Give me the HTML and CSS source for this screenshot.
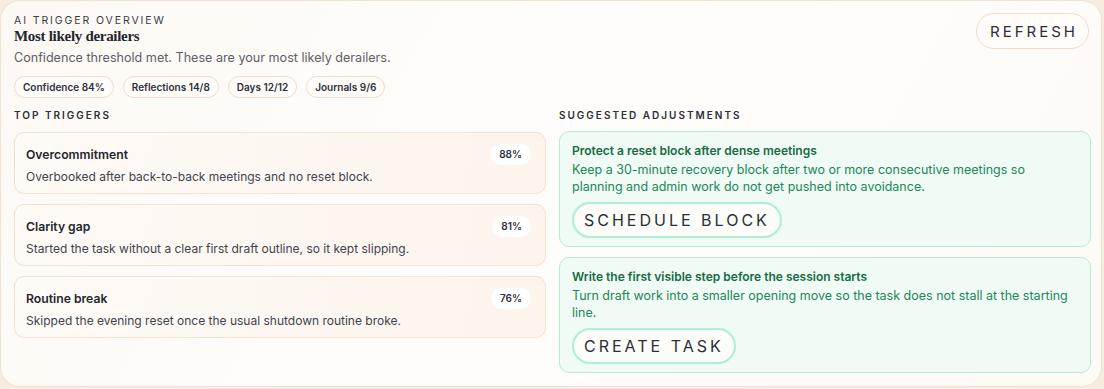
FILE: index.html
```html
<!DOCTYPE html>
<html lang="en">
<head>
    <meta charset="UTF-8">
    <meta name="viewport" content="width=device-width, initial-scale=1.0">
    <title>AI Trigger Overview</title>
    <link rel="stylesheet" href="styles.css">
</head>
<body>

    <section class="overview">
        <div class="overview-head">
            <div class="head-text">
                <div class="eyebrow">AI Trigger Overview</div>
                <h2>Most likely derailers</h2>
                <p class="subtitle">Confidence threshold met. These are your most likely derailers.</p>
                <div class="chips">
                    <span class="chip">Confidence 84%</span>
                    <span class="chip">Reflections 14/8</span>
                    <span class="chip">Days 12/12</span>
                    <span class="chip">Journals 9/6</span>
                </div>
            </div>
            <button class="refresh-btn">Refresh</button>
        </div>

        <div class="columns">
            <div class="column">
                <div class="section-label">Top Triggers</div>
                <div class="trigger">
                    <div class="trigger-top">
                        <span class="trigger-title">Overcommitment</span>
                        <span class="pct">88%</span>
                    </div>
                    <p>Overbooked after back-to-back meetings and no reset block.</p>
                </div>
                <div class="trigger">
                    <div class="trigger-top">
                        <span class="trigger-title">Clarity gap</span>
                        <span class="pct">81%</span>
                    </div>
                    <p>Started the task without a clear first draft outline, so it kept slipping.</p>
                </div>
                <div class="trigger">
                    <div class="trigger-top">
                        <span class="trigger-title">Routine break</span>
                        <span class="pct">76%</span>
                    </div>
                    <p>Skipped the evening reset once the usual shutdown routine broke.</p>
                </div>
            </div>

            <div class="column">
                <div class="section-label">Suggested Adjustments</div>
                <div class="suggestion">
                    <div class="suggestion-title">Protect a reset block after dense meetings</div>
                    <p>Keep a 30-minute recovery block after two or more consecutive meetings so planning and admin work do not get pushed into avoidance.</p>
                    <button class="action-btn">Schedule block</button>
                </div>
                <div class="suggestion">
                    <div class="suggestion-title">Write the first visible step before the session starts</div>
                    <p>Turn draft work into a smaller opening move so the task does not stall at the starting line.</p>
                    <button class="action-btn">Create task</button>
                </div>
            </div>
        </div>
    </section>

</body>
</html>
```
FILE: styles.css
```css
body {
    margin: 0;
    padding: 0;
    font-family: 'Inter', 'Noto Sans', sans-serif;
    background-color: #f7ece0;
    color: #2b2f3a;
}
.overview {
    box-sizing: border-box;
    width: 1102px;
    height: 387px;
    padding: 13px 13px 0 13px;
    border: 1px solid #f2e2d2;
    border-radius: 20px;
    background: linear-gradient(120deg, #fdf8f3 0%, #fffdfb 45%, #fefaf6 100%);
}
.overview-head {
    display: flex;
    justify-content: space-between;
    align-items: flex-start;
}
.eyebrow {
    font-size: 10.5px;
    letter-spacing: 1.9px;
    text-transform: uppercase;
    color: #3a3d45;
    line-height: 13px;
}
.overview h2 {
    margin: 0;
    font-family: 'Liberation Serif', 'DejaVu Serif', serif;
    font-weight: bold;
    font-size: 15px;
    letter-spacing: -0.3px;
    line-height: 19px;
    color: #23262e;
}
.subtitle {
    margin: 3px 0 0 0;
    font-size: 12.6px;
    line-height: 17px;
    color: #5d6068;
}
.chips {
    display: flex;
    gap: 9px;
    margin-top: 10px;
}
.chip {
    box-sizing: border-box;
    height: 22px;
    line-height: 20px;
    padding: 0 8px;
    border: 1px solid #f1dccb;
    border-radius: 11px;
    background-color: #fffcf9;
    font-size: 10px;
    font-weight: 600;
    color: #2b2f3a;
}
.refresh-btn {
    box-sizing: border-box;
    height: 36px;
    margin: -1px -1px 0 0;
    padding: 0 10px 0 13px;
    border: 1px solid #f1dccb;
    border-radius: 18px;
    background-color: #fffcf9;
    font-family: 'Inter', sans-serif;
    font-size: 15px;
    letter-spacing: 3px;
    text-transform: uppercase;
    color: #2b2f3a;
    cursor: pointer;
}
.columns {
    display: grid;
    grid-template-columns: 532px 532px;
    column-gap: 13px;
    margin-top: 11px;
}
.section-label {
    font-size: 10px;
    font-weight: 600;
    letter-spacing: 2px;
    text-transform: uppercase;
    color: #2b2f3a;
    line-height: 12px;
    margin-bottom: 11px;
}
.trigger {
    box-sizing: border-box;
    height: 62px;
    margin-bottom: 10px;
    padding: 11px 14px 0 11px;
    border: 1px solid #f3e1d1;
    border-radius: 10px;
    background: linear-gradient(100deg, #fefaf6 0%, #fdf4ec 100%);
}
.trigger-top {
    display: flex;
    justify-content: space-between;
    align-items: center;
    height: 20px;
}
.trigger-title {
    font-size: 12.2px;
    font-weight: 600;
    color: #23262e;
}
.pct {
    box-sizing: border-box;
    height: 21px;
    line-height: 21px;
    padding: 0 9px;
    border-radius: 11px;
    background-color: #ffffff;
    font-size: 10px;
    font-weight: 600;
    color: #2b2f3a;
}
.trigger p {
    margin: 4px 0 0 0;
    font-size: 12px;
    line-height: 17px;
    color: #3f434c;
}
.suggestion {
    box-sizing: border-box;
    height: 116px;
    margin-top: -1px;
    margin-bottom: 11px;
    padding: 10px 12px 0 12px;
    border: 1px solid #b7ecd5;
    border-radius: 10px;
    background-color: #effbf4;
}
.suggestion-title {
    font-size: 12px;
    font-weight: 600;
    line-height: 17px;
    color: #186b45;
}
.suggestion p {
    margin: 2px 0 0 0;
    font-size: 12.5px;
    line-height: 17px;
    color: #23865a;
}
.action-btn {
    box-sizing: border-box;
    height: 36px;
    margin-top: 7px;
    padding: 0 10px;
    border: 2px solid #aeeed3;
    border-radius: 18px;
    background-color: #fcfcf8;
    font-family: 'Inter', sans-serif;
    font-size: 16px;
    letter-spacing: 3px;
    text-transform: uppercase;
    color: #2b2f3a;
    cursor: pointer;
}
```
